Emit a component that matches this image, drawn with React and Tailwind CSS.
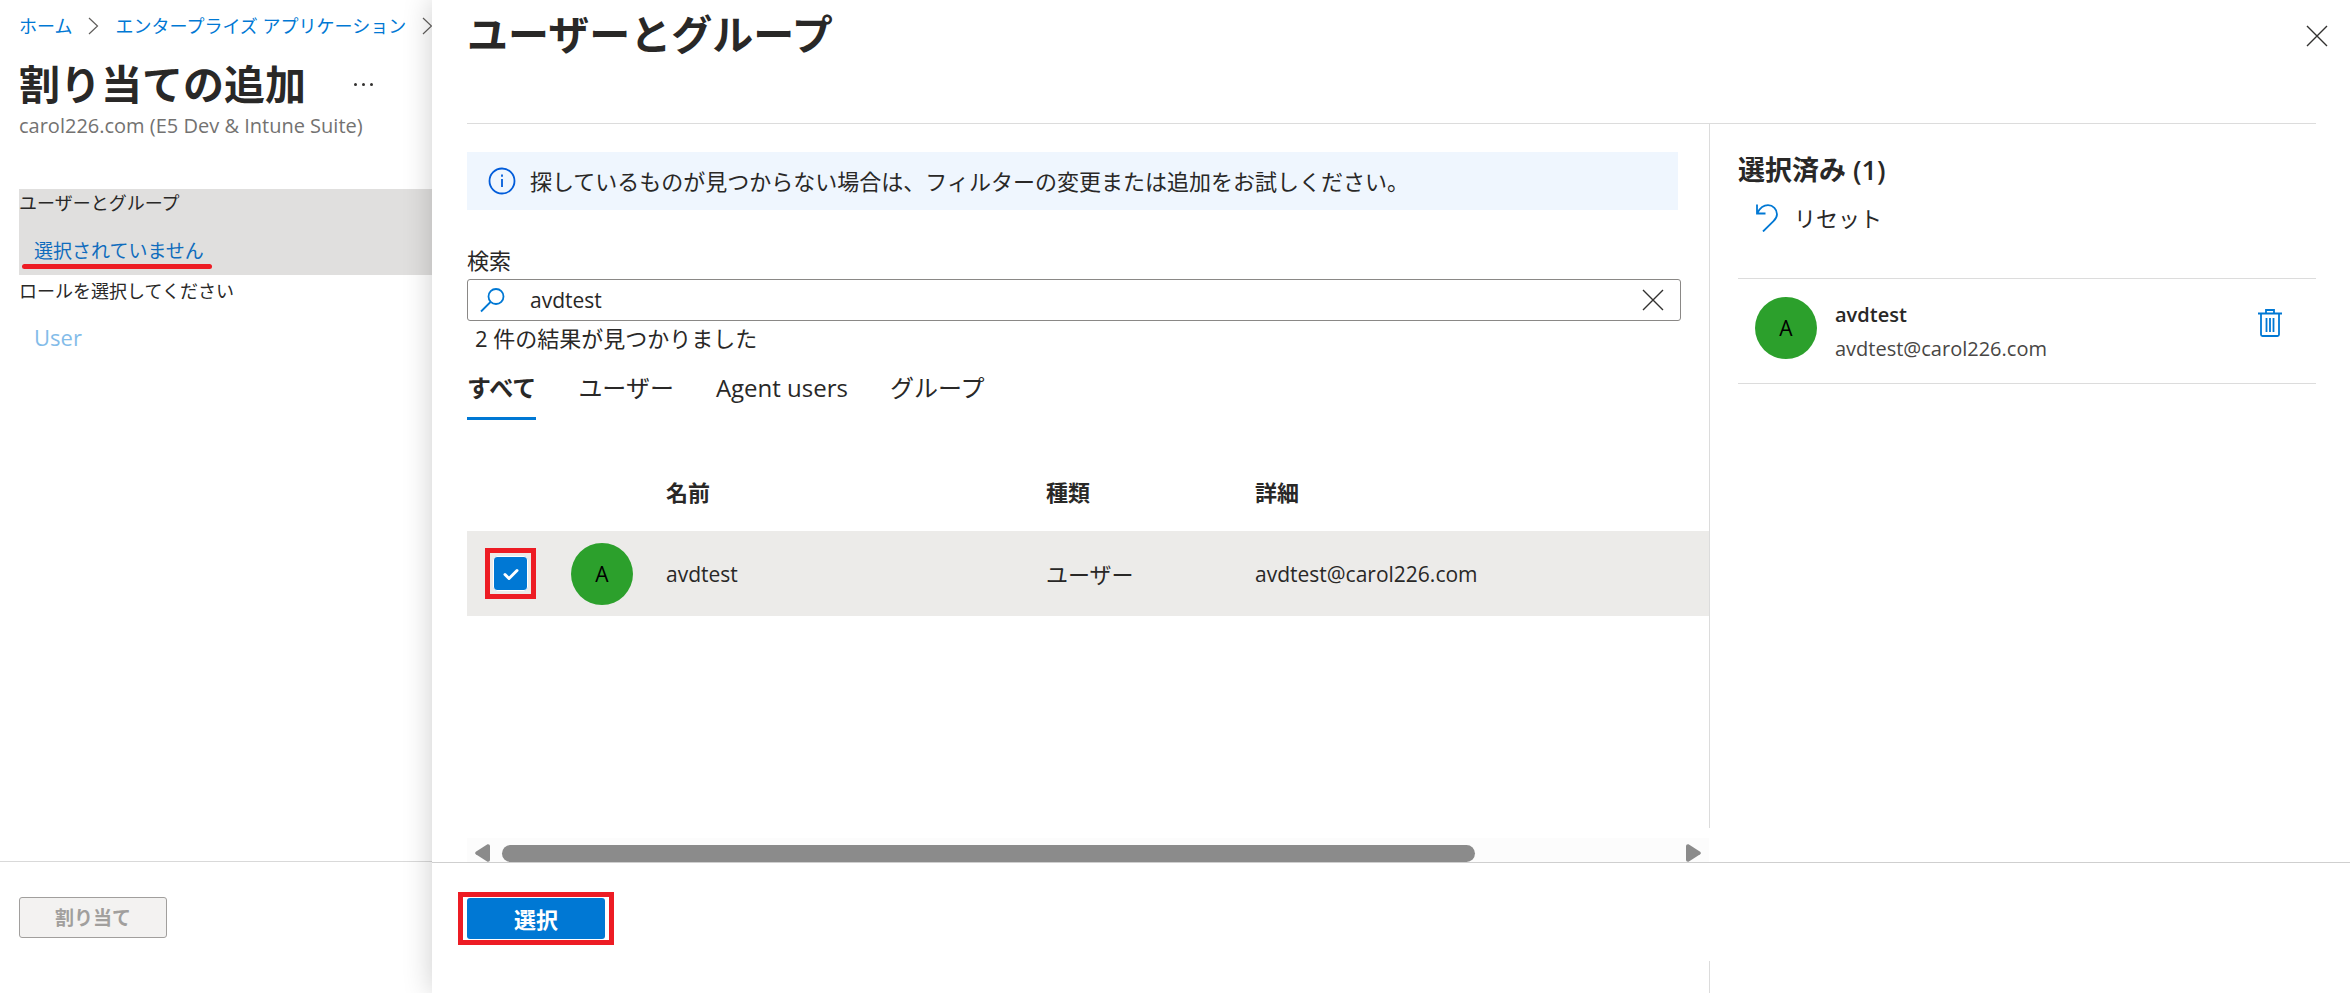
import { useState } from 'react';
import clsx from 'clsx';

const TABS = ['すべて', 'ユーザー', 'Agent users', 'グループ'];

const RESULTS = [{ id: 'avdtest', name: 'avdtest', type: 'ユーザー', detail: 'avdtest@carol226.com' }];

function Chevron() {
  return (
    <svg width="11" height="18" viewBox="0 0 11 18" fill="none" stroke="#605e5c" className="shrink-0">
      <path d="M1 1l8.5 8L1 17" strokeWidth="1.2" />
    </svg>
  );
}

function Cross() {
  return (
    <svg width="22" height="22" viewBox="0 0 22 22" fill="none" stroke="#323130" strokeWidth="1.4">
      <path d="M1 1l20 20M21 1L1 21" />
    </svg>
  );
}

function Avatar({ name }) {
  return (
    <span className="grid size-[62px] shrink-0 place-items-center rounded-full bg-[#2ca02c] text-[21px] leading-7 text-black">
      {name[0].toUpperCase()}
    </span>
  );
}

function AssignmentBlade() {
  return (
    <section className="flex w-[432px] shrink-0 flex-col overflow-hidden">
      <div className="flex-1 pl-[19px]">
        <nav className="flex items-center gap-4 pt-3 text-[18px] leading-7 whitespace-nowrap text-[#0078d4]">
          <a href="#home">ホーム</a>
          <Chevron />
          <a href="#apps">エンタープライズ アプリケーション</a>
          <Chevron />
        </nav>

        <div className="mt-4 flex items-center gap-12">
          <h1 className="text-[41px] leading-[56px] font-bold">割り当ての追加</h1>
          <button aria-label="その他" className="flex h-7 items-center gap-[5px]">
            <i className="size-[3px] rounded-full bg-[#323130]" />
            <i className="size-[3px] rounded-full bg-[#323130]" />
            <i className="size-[3px] rounded-full bg-[#323130]" />
          </button>
        </div>
        <p className="text-[20px] leading-7 text-[#737271]">carol226.com (E5 Dev &amp; Intune Suite)</p>

        <div className="mt-[49px] h-[86px] bg-[#e0dfde] text-[18px] leading-7">
          <p>ユーザーとグループ</p>
          <a href="#pick" className="relative mt-5 ml-[15px] inline-block text-[19px] text-[#0f6cbd]">
            選択されていません
            <span className="absolute top-[27px] -right-2 -left-3 h-[5px] rounded-sm bg-[#ed1c24]" />
          </a>
        </div>
        <p className="mt-0.5 text-[18px] leading-7">ロールを選択してください</p>
        <p className="mt-[18px] pl-[15px] text-[22px] leading-7 text-[#83bce9]">User</p>
      </div>

      <footer className="h-[132px] border-t border-[#d9d9d9] pt-[35px] pl-[19px]">
        <button
          disabled
          className="h-[41px] w-[148px] rounded-[3px] border border-[#a19f9d] bg-[#f3f2f1] text-[19px] leading-7 font-semibold text-[#a19f9d]"
        >
          割り当て
        </button>
      </footer>
    </section>
  );
}

function ResultsTable({ checked, onToggle }) {
  return (
    <table className="mt-[51px] w-full table-fixed text-left text-[22px]">
      <colgroup>
        <col className="w-[104px]" />
        <col className="w-[95px]" />
        <col className="w-[380px]" />
        <col className="w-[209px]" />
        <col />
      </colgroup>
      <thead>
        <tr className="h-[60px] align-top leading-[42px]">
          <th />
          <th />
          <th className="font-bold">名前</th>
          <th className="font-bold">種類</th>
          <th className="font-bold">詳細</th>
        </tr>
      </thead>
      <tbody>
        {RESULTS.map((row) => (
          <tr key={row.id} className="h-[85px] bg-[#ecebe9] text-[21px] leading-7">
            <td className="pl-[18px]">
              <label className="relative grid size-[51px] place-items-center border-5 border-[#ed1c24]">
                <input
                  type="checkbox"
                  checked={checked}
                  onChange={onToggle}
                  aria-label={row.name}
                  className="size-[35px] appearance-none rounded-sm border border-white bg-white checked:bg-[#0078d4]"
                />
                <svg width="18" height="14" viewBox="0 0 18 14" fill="none" className="pointer-events-none absolute">
                  <path d="M3 7.500l4 4 8-8" stroke="#fff" strokeWidth="3" strokeLinecap="round" strokeLinejoin="round" />
                </svg>
              </label>
            </td>
            <td><Avatar name={row.name} /></td>
            <td>{row.name}</td>
            <td className="text-[22px]">{row.type}</td>
            <td>{row.detail}</td>
          </tr>
        ))}
      </tbody>
    </table>
  );
}

function ScrollTrack() {
  return (
    <div className="mt-auto flex h-6 items-center gap-3 bg-[#fcfcfc] px-2 pt-1.5">
      <svg width="15" height="18" viewBox="0 0 15 18" fill="#8b8b8b">
        <path d="M12.500.3Q15 0 15 2v14q0 2-2.500 1.700L.8 10.300q-1.300-1.300 0-2.600z" />
      </svg>
      <div className="flex-1">
        <div className="h-[17px] w-[83%] rounded-full bg-[#8b8b8b]" />
      </div>
      <svg width="15" height="18" viewBox="0 0 15 18" fill="#8b8b8b">
        <path d="M2.500.3Q0 0 0 2v14q0 2 2.500 1.700l11.700-7.400q1.300-1.300 0-2.600z" />
      </svg>
    </div>
  );
}

function SelectedList() {
  return (
    <aside className="mb-[34px] w-[641px] shrink-0 border-l border-[#dcdcdc] pt-7 pr-[34px] pl-7">
      <h2 className="text-[27px] leading-9 font-bold">
        選択済み <span className="font-semibold">(1)</span>
      </h2>
      <button className="mt-[14px] ml-[18px] flex items-center gap-4 text-[22px] leading-8">
        <svg width="22" height="28" viewBox="0 0 22 28" fill="none" stroke="#0078d4" strokeWidth="1.8">
          <path d="M1 .5v9h8.500M1.300 9C4 4 7.500 1.200 12 1.200c5 0 9 4 9 9 0 3-1.500 5-3.500 7L7 27.500" />
        </svg>
        リセット
      </button>
      <ul className="mt-11 border-t border-[#dcdcdc]">
        <li className="flex h-[105px] items-start border-b border-[#dcdcdc] pt-[18px] pr-[34px] pl-[17px]">
          <Avatar name="avdtest" />
          <div className="ml-[18px] flex-1">
            <p className="pt-0.5 text-[20px] leading-8 font-semibold">avdtest</p>
            <p className="text-[20px] leading-9 text-[#484644]">avdtest@carol226.com</p>
          </div>
          <button aria-label="削除" className="pt-3">
            <svg width="24" height="28" viewBox="0 0 24 28" fill="none" stroke="#0078d4" strokeWidth="1.8">
              <path d="M0 4.500h24M8 4V1h8v3M3 5v20.500q0 1.500 1.500 1.500h15q1.500 0 1.500-1.500V5M8.500 9v14M12 9v14M15.500 9v14" />
            </svg>
          </button>
        </li>
      </ul>
    </aside>
  );
}

function UserPicker() {
  const [query, setQuery] = useState('avdtest');
  const [tab, setTab] = useState('すべて');
  const [checked, setChecked] = useState(true);

  return (
    <section className="relative flex min-w-0 flex-1 flex-col bg-white shadow-[0_0_28px_rgba(0,0,0,0.2)]">
      <header className="mr-[34px] ml-[35px] flex h-[124px] items-start justify-between border-b border-[#dcdcdc]">
        <h1 className="pt-1.5 text-[41px] leading-[56px] font-bold">ユーザーとグループ</h1>
        <button aria-label="閉じる" className="-mr-3 pt-[25px]">
          <Cross />
        </button>
      </header>

      <div className="flex flex-1">
        <div className="flex min-w-0 flex-1 flex-col pl-[35px]">
          <div className="mt-7 mr-[31px] flex h-[58px] items-center gap-[14px] bg-[#eff6fe] pl-[21px] text-[22px] leading-8">
            <svg width="28" height="28" viewBox="0 0 28 28" fill="none" stroke="#015cda" strokeWidth="1.800">
              <circle cx="14" cy="14" r="12.500" />
              <path d="M14 12v8M14 7.500v2.200" />
            </svg>
            探しているものが見つからない場合は、フィルターの変更または追加をお試しください。
          </div>

          <label htmlFor="search" className="mt-[34px] text-[22px] leading-8">検索</label>
          <div className="mt-[3px] mr-7 flex h-[42px] items-center rounded-[3px] border border-[#8a8886] pr-4 pl-3">
            <svg width="25" height="25" viewBox="0 0 25 25" fill="none" stroke="#0078d4" strokeWidth="1.800">
              <circle cx="16" cy="8.500" r="7.500" />
              <path d="M10.500 14L1 23.500" />
            </svg>
            <input
              id="search"
              value={query}
              onChange={(e) => setQuery(e.target.value)}
              className="ml-[25px] min-w-0 flex-1 text-[21px] leading-8 outline-none"
            />
            <button aria-label="クリア" onClick={() => setQuery('')}>
              <Cross />
            </button>
          </div>
          <p className="mt-px pl-2 text-[22px] leading-8">2 件の結果が見つかりました</p>

          <div role="tablist" className="mt-[17px] flex gap-[42px] text-[24px]">
            {TABS.map((name) => (
              <button
                key={name}
                role="tab"
                aria-selected={tab === name}
                onClick={() => setTab(name)}
                className={clsx(
                  'h-[49px] border-b-3 pb-3 leading-8',
                  tab === name ? 'border-[#0078d4] font-bold' : 'border-transparent'
                )}
              >
                {name}
              </button>
            ))}
          </div>

          <ResultsTable checked={checked} onToggle={() => setChecked(!checked)} />
          <ScrollTrack />
        </div>
        <SelectedList />
      </div>

      <footer className="flex h-[131px] flex-col justify-between border-t border-[#cfcfcf]">
        <div className="mt-[29px] ml-[26px] w-fit border-5 border-[#ed1c24] px-1 py-px">
          <button className="block h-[41px] w-[138px] rounded-[3px] bg-[#0078d4] text-[22px] leading-8 font-bold text-white">
            選択
          </button>
        </div>
        <div className="ml-auto h-8 w-[641px] border-l border-[#dcdcdc]" />
      </footer>
    </section>
  );
}

export default function App() {
  return (
    <main className="flex min-h-screen bg-white font-['Open_Sans','Noto_Sans_CJK_JP',sans-serif] text-[#292827]">
      <AssignmentBlade />
      <UserPicker />
    </main>
  );
}
